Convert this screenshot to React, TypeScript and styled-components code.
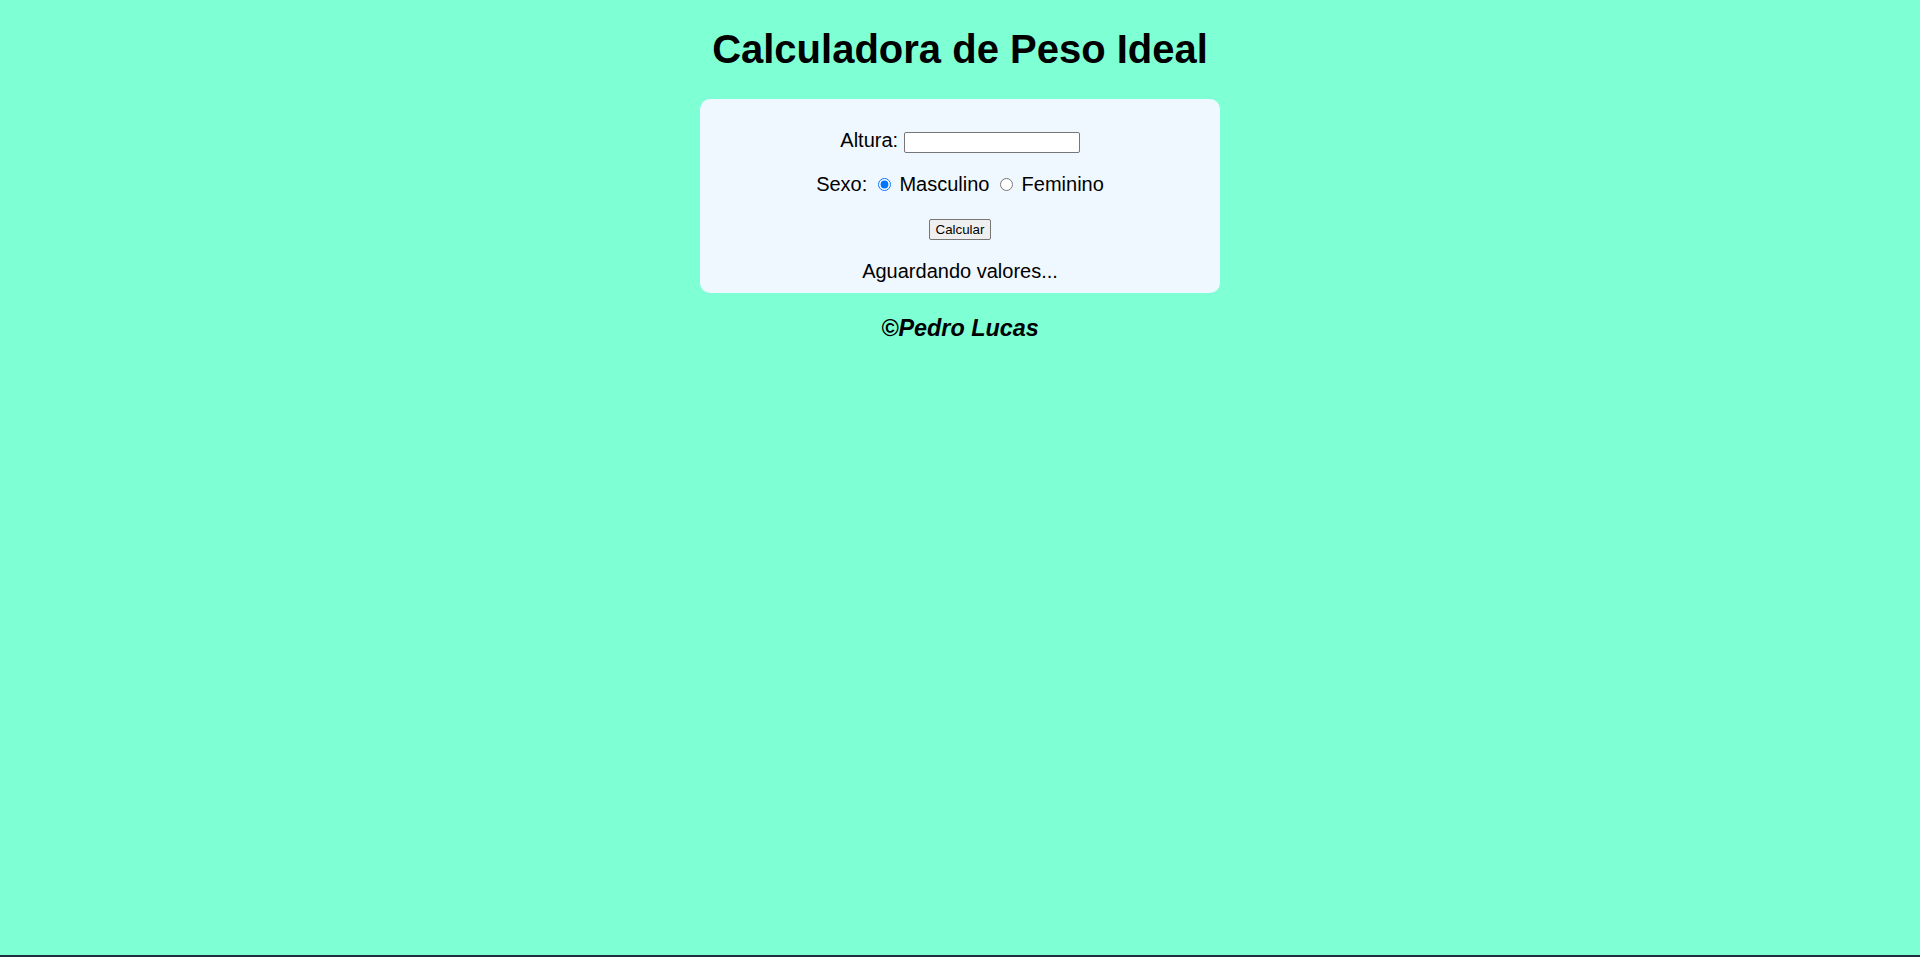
import { useState } from 'react'
import styled, { createGlobalStyle } from 'styled-components'

const GlobalStyle = createGlobalStyle`
  html, body {
    margin: 0;
    padding: 0;
  }
  body {
    background-color: #7fffd4;
    font-family: "Liberation Sans", Arial, sans-serif;
    font-size: 20px;
    color: #000;
  }
`

const Page = styled.div`
  min-height: 100vh;
  display: flex;
  flex-direction: column;
  box-sizing: border-box;
`

const Main = styled.main`
  flex: 1;
  padding: 0 8px;
`

const Title = styled.h1`
  font-size: 40px;
  font-weight: bold;
  text-align: center;
  margin: 27px 0;
`

const Card = styled.section`
  box-sizing: border-box;
  width: 520px;
  margin: 0 auto;
  padding: 10px;
  background-color: #f0f8ff;
  border-radius: 10px;
  text-align: center;
`

const Field = styled.p<{ $gap?: number }>`
  margin: ${(p) => p.$gap ?? 20}px 0;
`

const TextInput = styled.input`
  box-sizing: border-box;
  width: 176px;
  height: 21px;
  padding: 1px 2px;
  border: 1px solid #767676;
  border-radius: 2px;
  font: 13.33px "Liberation Sans", Arial, sans-serif;
  vertical-align: baseline;
`

const Radio = styled.input`
  width: 13px;
  height: 13px;
  margin: 3px 3px 0 5px;
  accent-color: #0075ff;
`

const Button = styled.button`
  box-sizing: border-box;
  height: 21px;
  padding: 1px 6px;
  border: 1px solid #767676;
  border-radius: 2px;
  background-color: #efefef;
  font: 13.33px "Liberation Sans", Arial, sans-serif;
  color: #000;
`

const Result = styled.p`
  margin: 18px 0 0;
`

const Signature = styled.h3`
  font-size: 23.4px;
  font-weight: bold;
  font-style: italic;
  text-align: center;
  margin: 22px 0;
`

const BottomEdge = styled.div`
  height: 2px;
  background-color: #1e2d40;
`

export default function App() {
  const [altura, setAltura] = useState('')
  const [sexo, setSexo] = useState<'m' | 'f'>('m')
  const [resultado, setResultado] = useState('Aguardando valores...')

  const calcular = () => {
    const h = parseFloat(altura.replace(',', '.'))
    if (!h) {
      setResultado('Aguardando valores...')
      return
    }
    const peso = sexo === 'm' ? 72.7 * h - 58 : 62.1 * h - 44.7
    setResultado(`Seu peso ideal é ${peso.toFixed(2)} kg`)
  }

  return (
    <>
      <GlobalStyle />
      <Page>
        <Main>
          <Title>Calculadora de Peso Ideal</Title>
          <Card>
            <Field>
              Altura: <TextInput type="text" value={altura} onChange={(e) => setAltura(e.target.value)} />
            </Field>
            <Field>
              Sexo:{' '}
              <Radio type="radio" name="sexo" checked={sexo === 'm'} onChange={() => setSexo('m')} /> Masculino{' '}
              <Radio type="radio" name="sexo" checked={sexo === 'f'} onChange={() => setSexo('f')} /> Feminino
            </Field>
            <Field>
              <Button type="button" onClick={calcular}>Calcular</Button>
            </Field>
            <Result>{resultado}</Result>
          </Card>
          <Signature>©Pedro Lucas</Signature>
        </Main>
        <BottomEdge />
      </Page>
    </>
  )
}
